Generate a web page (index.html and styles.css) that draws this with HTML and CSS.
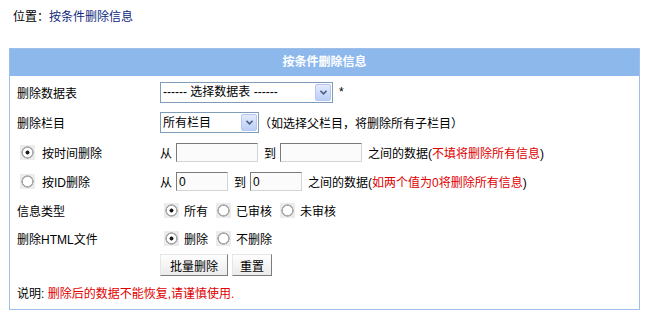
FILE: index.html
```html
<!DOCTYPE html>
<html lang="zh-CN">
  <head>
    <meta charset="UTF-8" />
    <meta name="viewport" content="width=device-width, initial-scale=1.0" />
    <title>按条件删除信息</title>
    <link rel="stylesheet" href="styles.css">
  </head>
  <body>
    <div class="crumb">位置：<a href="#">按条件删除信息</a></div>

    <form class="panel" action="#" method="POST">
      <div class="panel-head">按条件删除信息</div>
      <div class="rows">
        <div class="label">删除数据表</div>
        <div class="field">
          <span class="select wide">
            <select name="tbname">
              <option>------ 选择数据表 ------</option>
            </select>
            <span class="arrow"><svg width="7" height="5" viewBox="0 0 7 5"><path d="M0.5 0.8 L3.5 3.8 L6.5 0.8" fill="none" stroke="#4d6185" stroke-width="1.6"/></svg></span>
          </span>
          <span class="req">*</span>
        </div>

        <div class="label">删除栏目</div>
        <div class="field">
          <span class="select narrow">
            <select name="classid">
              <option>所有栏目</option>
            </select>
            <span class="arrow"><svg width="7" height="5" viewBox="0 0 7 5"><path d="M0.5 0.8 L3.5 3.8 L6.5 0.8" fill="none" stroke="#4d6185" stroke-width="1.6"/></svg></span>
          </span>
          <span class="hint">（如选择父栏目，将删除所有子栏目）</span>
        </div>

        <label class="label choice"><input type="radio" name="retype" value="0" checked />按时间删除</label>
        <div class="field">
          从<input class="text long" type="text" name="startday" />
          <span class="to">到</span><input class="text long" type="text" name="endday" />
          <span class="note">之间的数据(<em>不填将删除所有信息</em>)</span>
        </div>

        <label class="label choice"><input type="radio" name="retype" value="1" />按ID删除</label>
        <div class="field">
          从<input class="text short" type="text" name="startid" value="0" />
          <span class="to">到</span><input class="text short" type="text" name="endid" value="0" />
          <span class="note">之间的数据(<em>如两个值为0将删除所有信息</em>)</span>
        </div>

        <div class="label">信息类型</div>
        <div class="field options">
          <label><input type="radio" name="infost" value="0" checked />所有</label>
          <label><input type="radio" name="infost" value="1" />已审核</label>
          <label><input type="radio" name="infost" value="2" />未审核</label>
        </div>

        <div class="label">删除HTML文件</div>
        <div class="field options">
          <label><input type="radio" name="delhtml" value="1" checked />删除</label>
          <label><input type="radio" name="delhtml" value="0" />不删除</label>
        </div>

        <div class="label"></div>
        <div class="field buttons">
          <button type="submit">批量删除</button>
          <button type="reset">重置</button>
        </div>

        <div class="explain">说明: <em>删除后的数据不能恢复,请谨慎使用.</em></div>
      </div>
    </form>
  </body>
</html>
```

FILE: styles.css
```css
body {
  margin: 8px;
  font-family: "Liberation Sans", "Noto Sans CJK SC", sans-serif;
  font-size: 12px;
  color: #000;
  background: #fff;
}
em {
  font-style: normal;
  color: #e00000;
}
.crumb {
  line-height: 18px;
  padding-left: 5px;
  margin-bottom: 22px;
}
.crumb a {
  color: #0f2a80;
  text-decoration: none;
}
.panel {
  width: 631px;
  box-sizing: border-box;
  margin: 0 0 0 1px;
  border: 1px solid #9fbfe8;
  padding-bottom: 3px;
}
.panel-head {
  height: 27px;
  line-height: 27px;
  text-align: center;
  font-weight: bold;
  color: #fff;
  background: #8db8ec;
}
.rows {
  display: grid;
  grid-template-columns: 150px 1fr;
  grid-template-rows: 32px 29px 30px 29px 28px 28px 26px 28px;
  align-items: center;
}
.label {
  padding-left: 7px;
}
.choice {
  display: flex;
  align-items: center;
  gap: 7px;
  padding-left: 10px;
}
.field {
  display: flex;
  align-items: center;
}
.select {
  display: inline-flex;
  align-items: center;
  height: 21px;
  box-sizing: border-box;
  border: 1px solid #7f9db9;
  background: #fff;
}
.select.wide {
  width: 173px;
}
.select.narrow {
  width: 99px;
}
.select select {
  appearance: none;
  -webkit-appearance: none;
  flex: 1;
  min-width: 0;
  height: 100%;
  border: 0;
  padding: 0 0 0 2px;
  background: transparent;
  font: inherit;
  color: #000;
  outline: none;
}
.arrow {
  display: flex;
  align-items: center;
  justify-content: center;
  width: 16px;
  height: 17px;
  box-sizing: border-box;
  margin-right: 1px;
  border: 1px solid #b6c8f0;
  border-radius: 2px;
  background: linear-gradient(#e2eafc, #bccff8);
}
.req {
  margin-left: 6px;
}
.text {
  height: 19px;
  box-sizing: border-box;
  margin: 0 0 0 4px;
  padding: 0 2px;
  border: 1px solid;
  border-color: #7b7b7b #d4d4d4 #d4d4d4 #7b7b7b;
  background: #fbfbfb;
  font: inherit;
  color: #000;
}
.text.long {
  width: 82px;
}
.text.short {
  width: 52px;
}
.to {
  margin-left: 6px;
}
.note {
  margin-left: 6px;
}
input[type="radio"] {
  appearance: none;
  -webkit-appearance: none;
  width: 15px;
  height: 15px;
  margin: 0;
  flex: none;
  background: radial-gradient(circle, #fff 0 4.4px, #a9a9a9 4.9px 5.9px, #ececec 6.4px);
}
input[type="radio"]:checked {
  background: radial-gradient(circle, #1c1c1c 0 1.7px, #fff 2.3px 4.4px, #a9a9a9 4.9px 5.9px, #ececec 6.4px);
}
.options {
  gap: 8px;
  padding-left: 4px;
}
.options label {
  display: flex;
  align-items: center;
  gap: 5px;
}
.buttons {
  gap: 4px;
}
.buttons button {
  height: 22px;
  padding: 0 9px;
  font: inherit;
  color: #000;
  border: 1px solid;
  border-color: #e6e6e6 #7d7d7d #7d7d7d #e6e6e6;
  background: linear-gradient(#fefefe, #ebebeb);
}
.buttons button[type="reset"] {
  padding: 0 7px;
}
.explain {
  grid-column: 1 / 3;
  padding-left: 7px;
}
```
